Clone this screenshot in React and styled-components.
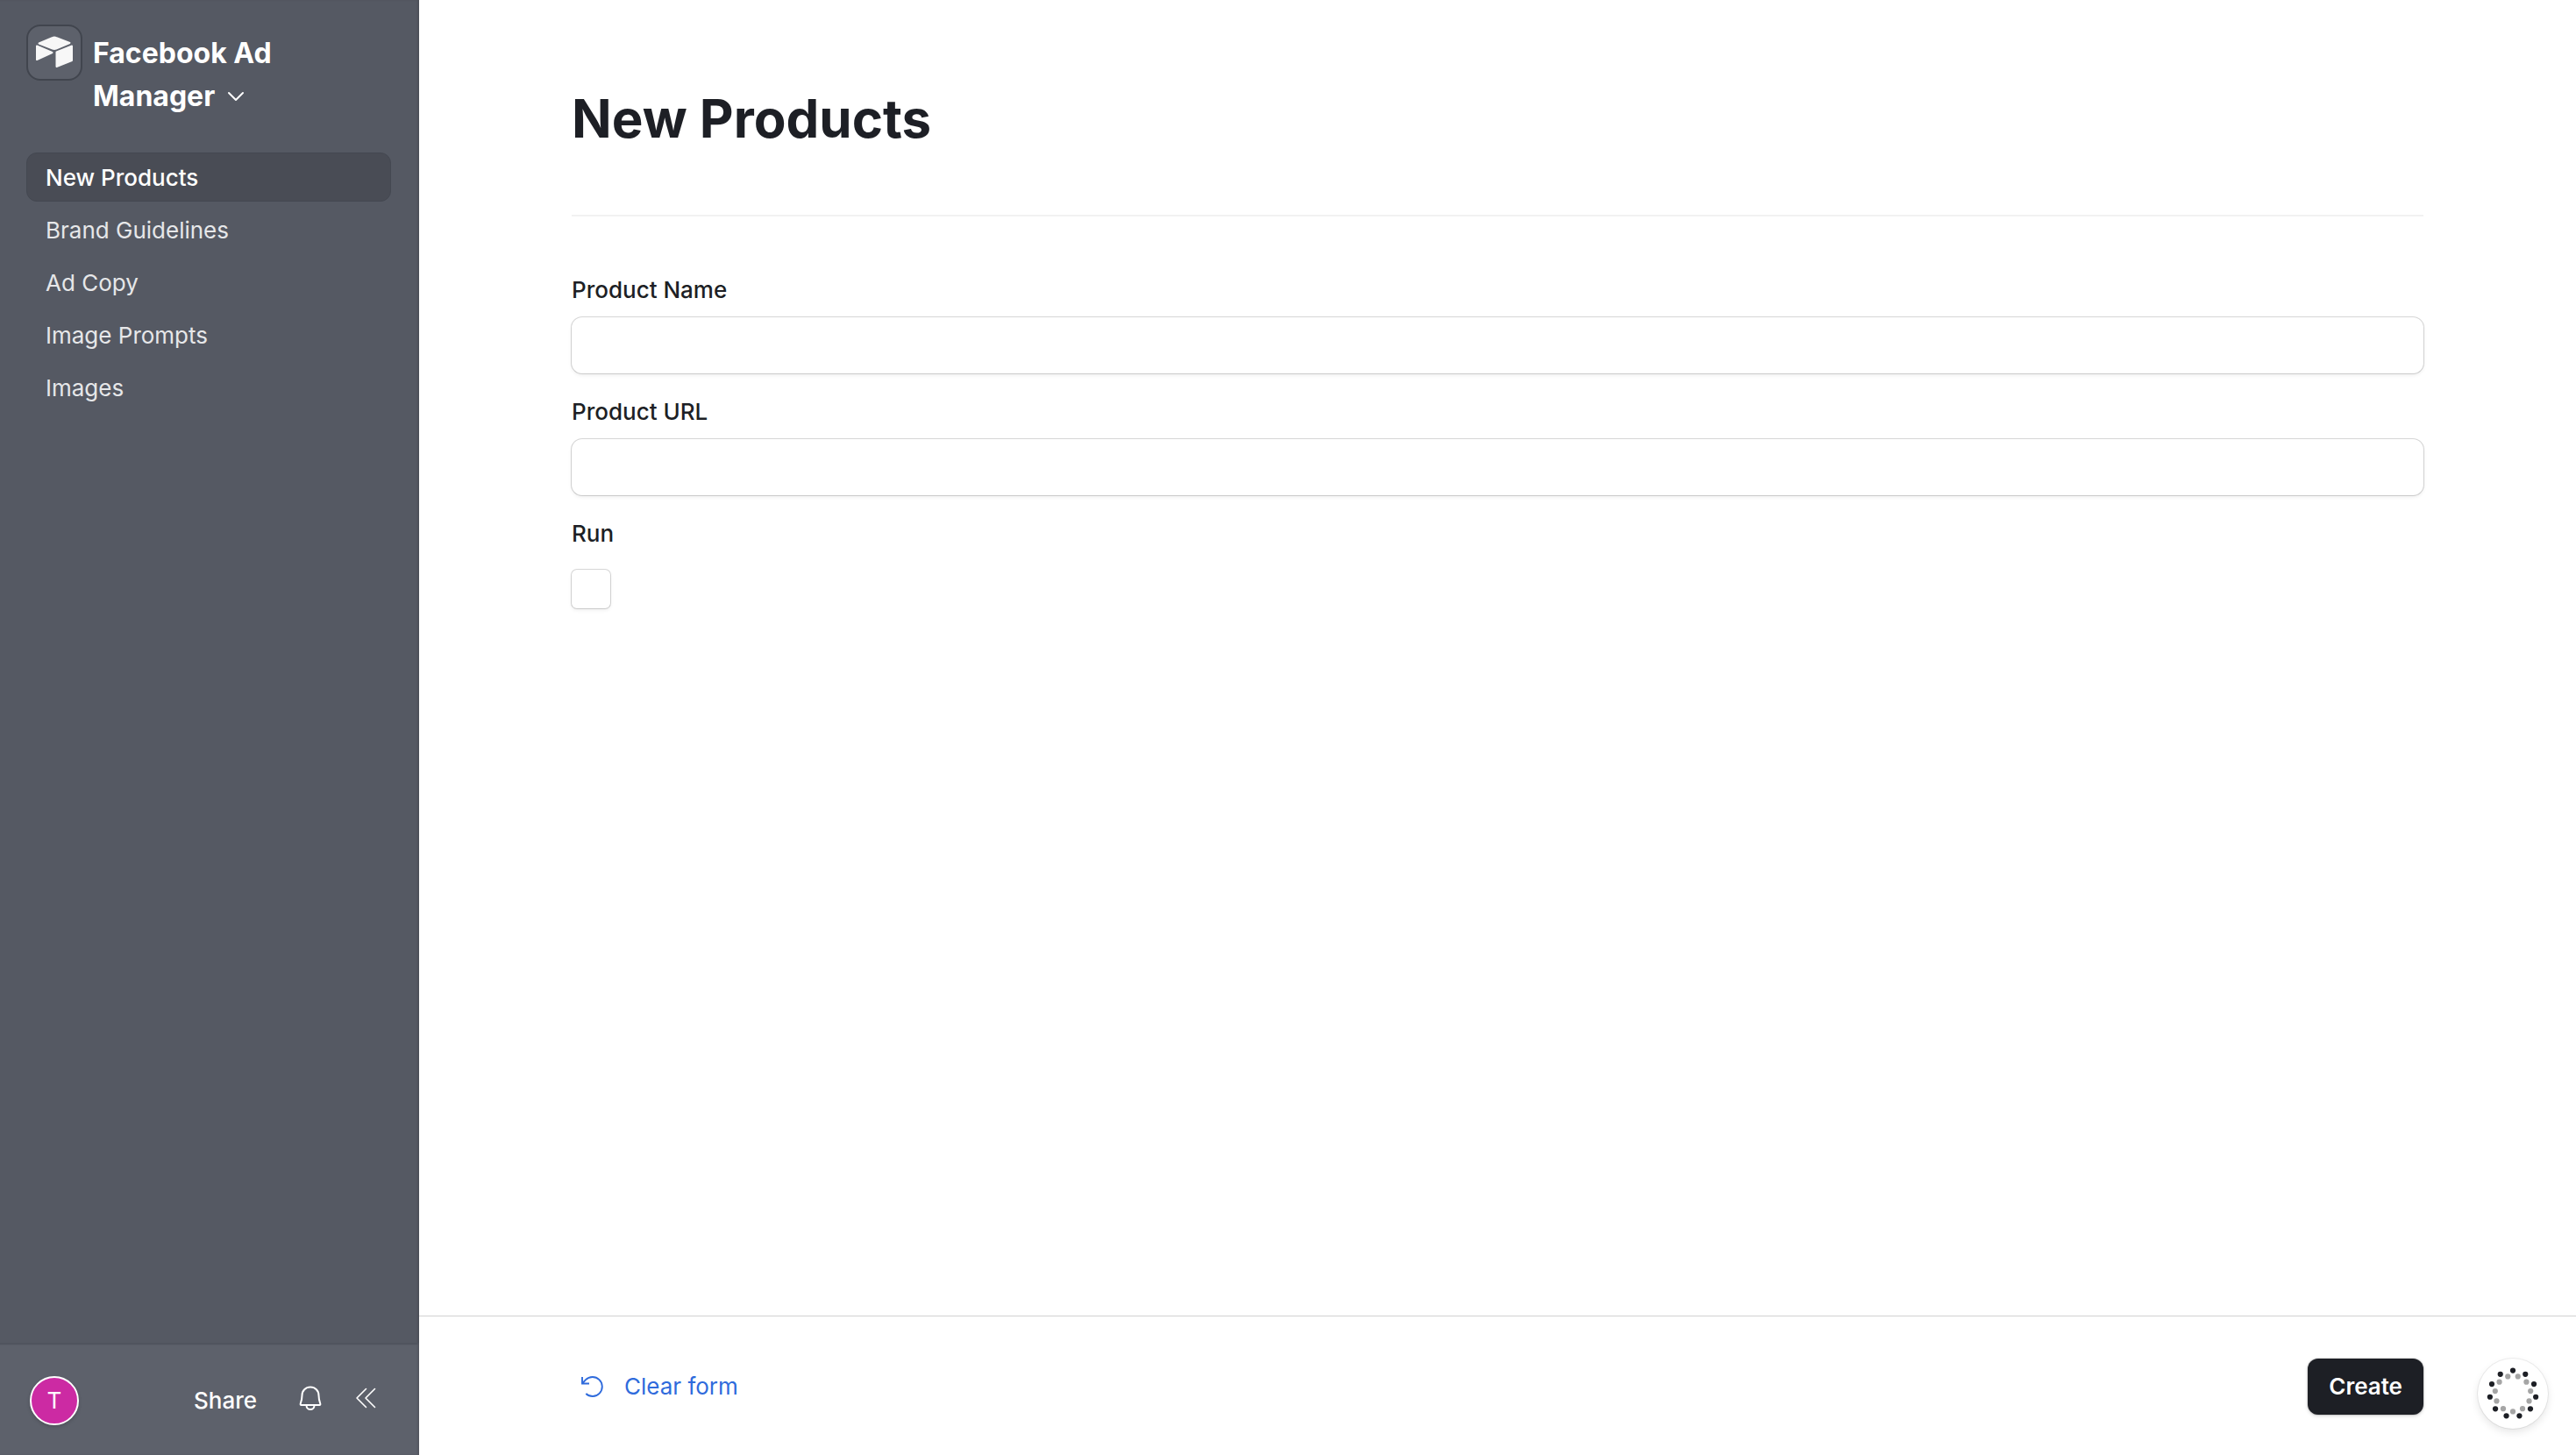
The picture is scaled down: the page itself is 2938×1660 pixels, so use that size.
import React, { useState } from "react";
import styled, { createGlobalStyle } from "styled-components";

const GlobalStyle = createGlobalStyle`
  *, *::before, *::after { box-sizing: border-box; }
  body {
    margin: 0;
    background: #fff;
    color: #1d1f25;
    font-family: Inter, "Noto Sans", sans-serif;
    font-size: 26px;
    line-height: 40px;
    -webkit-font-smoothing: antialiased;
  }
  button, input { font: inherit; color: inherit; }
  svg { display: block; flex: none; }
`;

const Page = styled.div`
  display: flex;
  min-height: 100vh;
`;

const Sidebar = styled.aside`
  flex: none;
  width: 478px;
  display: flex;
  flex-direction: column;
  background: #555963;
  color: #fff;
  box-shadow: inset -2px 0 2px rgba(0, 0, 0, 0.1);
`;

const SidebarTop = styled.div`
  flex: 1;
  padding: 28px 32px 28px 30px;
`;

const Brand = styled.header`
  display: flex;
  align-items: flex-start;
  gap: 12px;
`;

const LogoBox = styled.div`
  flex: none;
  width: 64px;
  height: 64px;
  display: grid;
  place-items: center;
  padding-bottom: 2px;
  border: 2px solid #41454e;
  border-radius: 16px;
  background: #5d616b;
`;

const BrandButton = styled.button`
  max-width: 240px;
  margin: 0;
  padding: 8px 0 0;
  border: 0;
  background: none;
  text-align: left;
  font-size: 32px;
  font-weight: 700;
  line-height: 49px;

  svg {
    display: inline-block;
    margin: 0 0 4px 14px;
    vertical-align: middle;
  }
`;

const Nav = styled.nav`
  display: flex;
  flex-direction: column;
  gap: 4px;
  margin-top: 40px;
`;

const NavLink = styled.a`
  padding: 8px 21px 6px;
  border: 1px solid ${(p) => (p.$active ? "#444851" : "transparent")};
  border-radius: 12px;
  background: ${(p) => (p.$active ? "#494c55" : "transparent")};
  color: ${(p) => (p.$active ? "#fff" : "#e6e7e9")};
  font-weight: ${(p) => (p.$active ? 500 : 400)};
  text-decoration: none;
`;

const SidebarFooter = styled.footer`
  display: flex;
  align-items: center;
  justify-content: space-between;
  height: 128px;
  padding: 2px 49px 0 34px;
  border-top: 2px solid #50545e;
  background: #5d616b;
  box-shadow: inset -2px 0 2px rgba(0, 0, 0, 0.1);
`;

const Avatar = styled.button`
  width: 56px;
  height: 56px;
  padding: 0;
  border: 2px solid #fff;
  border-radius: 50%;
  background: #cc2aa3;
  box-shadow: 0 2px 4px rgba(0, 0, 0, 0.16);
  line-height: 52px;
`;

const FooterActions = styled.div`
  display: flex;
  align-items: center;
`;

const PlainButton = styled.button`
  display: flex;
  align-items: center;
  gap: ${(p) => p.$gap || 0}px;
  margin: 0;
  padding: 0;
  border: 0;
  background: none;
  color: ${(p) => p.$color || "#fff"};
  font-weight: ${(p) => p.$weight || 400};
`;

const IconButton = styled(PlainButton)`
  padding-bottom: 6px;
  margin-left: ${(p) => p.$space}px;
`;

const Main = styled.main`
  flex: 1;
  min-width: 0;
  display: flex;
  flex-direction: column;
`;

const Form = styled.form`
  flex: 1;
  display: flex;
  flex-direction: column;
`;

const FormBody = styled.div`
  flex: 1;
  padding: 95px 174px 48px;
`;

const Title = styled.h1`
  margin: 0 0 64px;
  padding: 0 0 70px;
  border-bottom: 2px solid #f2f2f2;
  font-size: 60px;
  font-weight: 700;
  line-height: 80px;
`;

const Fields = styled.div`
  display: flex;
  flex-direction: column;
  gap: 24px;
`;

const Field = styled.div`
  display: flex;
  flex-direction: column;
  align-items: flex-start;
  gap: ${(p) => (p.$wide ? 21 : 11)}px;

  label { font-weight: 500; }
`;

const fieldShadow = `
  0 0 0 1px rgba(0, 0, 0, 0.14),
  0 0 2px rgba(0, 0, 0, 0.06),
  0 2px 4px rgba(0, 0, 0, 0.08)
`;

const TextInput = styled.input`
  width: 100%;
  height: 64px;
  padding: 0 16px;
  border: 0;
  border-radius: 12px;
  outline: none;
  background: #fff;
  box-shadow: ${fieldShadow};
`;

const Checkbox = styled.input`
  appearance: none;
  width: 44px;
  height: 44px;
  margin: 0;
  border-radius: 6px;
  background: #fff;
  box-shadow: ${fieldShadow};

  &:checked { background: #1d1f25; }
`;

const FormFooter = styled.footer`
  display: flex;
  align-items: center;
  justify-content: space-between;
  height: 159px;
  padding: 2px 174px 0 184px;
  border-top: 1px solid #d6d6d6;
  box-shadow: 0 -1px 0 rgba(0, 0, 0, 0.03);
`;

const CreateButton = styled.button`
  height: 64px;
  padding: 0 24px;
  border: 0;
  border-radius: 12px;
  background: #1d1f25;
  color: #fff;
  box-shadow: 0 0 2px rgba(0, 0, 0, 0.4), 0 2px 4px rgba(0, 0, 0, 0.12);
  font-weight: 600;
`;

const HelpButton = styled.button`
  position: fixed;
  right: 32px;
  bottom: 30px;
  width: 80px;
  height: 80px;
  display: grid;
  place-items: center;
  padding: 0;
  border: 0;
  border-radius: 50%;
  background: #fff;
  box-shadow: 0 0 0 1px rgba(0, 0, 0, 0.07), 0 4px 10px rgba(0, 0, 0, 0.1);
`;

const Logo = () => (
  <svg width="44" height="38" viewBox="0 0 44 38" fill="#f7f7f7" stroke="#f7f7f7" strokeWidth="2" strokeLinejoin="round" aria-hidden="true">
    <path d="M4.5 9.5 20 3Q22 2 24 3L39.500 9 24 15.500Q22 16.300 20 15.500Z" />
    <path d="M2 12.500 19.500 20 2 28Z" />
    <path d="M24.500 19.500 42 12.500V29L24.500 36Z" />
  </svg>
);

const ChevronDown = () => (
  <svg width="20" height="12" viewBox="0 0 20 12" fill="none" stroke="#fff" strokeWidth="2" strokeLinecap="round" strokeLinejoin="round" aria-hidden="true">
    <path d="m2 2 8 8 8-8" />
  </svg>
);

const Bell = () => (
  <svg width="26" height="28" viewBox="0 0 26 28" fill="none" stroke="#fff" strokeWidth="2" strokeLinecap="round" strokeLinejoin="round" aria-hidden="true">
    <path d="M3.500 11C3.500 5.500 7.500 1.500 13 1.500S22.500 5.500 22.500 11C22.500 15.500 23.400 18 24.300 20.500Q24.600 22 23.500 22H2.500Q1.400 22 1.700 20.500C2.600 18 3.500 15.500 3.500 11Z" />
    <path d="M8.500 22.500a4.500 4.500 0 0 0 9 0" />
  </svg>
);

const ChevronsLeft = () => (
  <svg width="24" height="24" viewBox="0 0 24 24" fill="none" stroke="#fff" strokeWidth="1.600" strokeLinecap="round" strokeLinejoin="round" aria-hidden="true">
    <path d="M12.500 1.500 2 12l10.500 10.500M22.500 1.500 12 12l10.500 10.500" />
  </svg>
);

const ResetIcon = () => (
  <svg width="28" height="26" viewBox="0 0 28 26" fill="none" stroke="currentColor" strokeWidth="1.900" strokeLinejoin="miter" aria-hidden="true">
    <path d="M2 2v7.500h8" />
    <path d="M2.500 9 6 5.200a11 11 0 1 1 .3 15.800" />
  </svg>
);

const ring = (radius, start, color) =>
  Array.from({ length: 11 }, (_, i) => {
    const a = ((start + (i * 360) / 11) * Math.PI) / 180;
    return (
      <circle
        key={`${color}${i}`}
        cx={32 + radius * Math.cos(a)}
        cy={32 + radius * Math.sin(a)}
        r="3.1"
        fill={color}
      />
    );
  });

const DotRing = () => (
  <svg width="64" height="64" viewBox="0 0 64 64" aria-hidden="true">
    {ring(20.4, 90, "#a5a5a5")}
    {ring(26.4, -90, "#1d1f25")}
  </svg>
);

const pages = ["New Products", "Brand Guidelines", "Ad Copy", "Image Prompts", "Images"];

export default function App() {
  const [active, setActive] = useState(pages[0]);

  return (
    <>
      <GlobalStyle />
      <Page>
        <Sidebar>
          <SidebarTop>
            <Brand>
              <LogoBox>
                <Logo />
              </LogoBox>
              <BrandButton type="button">
                Facebook Ad Manager
                <ChevronDown />
              </BrandButton>
            </Brand>
            <Nav>
              {pages.map((name) => (
                <NavLink
                  key={name}
                  href="#"
                  $active={name === active}
                  aria-current={name === active ? "page" : undefined}
                  onClick={(e) => {
                    e.preventDefault();
                    setActive(name);
                  }}
                >
                  {name}
                </NavLink>
              ))}
            </Nav>
          </SidebarTop>
          <SidebarFooter>
            <Avatar type="button">T</Avatar>
            <FooterActions>
              <PlainButton type="button" $weight={500}>Share</PlainButton>
              <IconButton type="button" $space={48} aria-label="Notifications">
                <Bell />
              </IconButton>
              <IconButton type="button" $space={38} aria-label="Collapse sidebar">
                <ChevronsLeft />
              </IconButton>
            </FooterActions>
          </SidebarFooter>
        </Sidebar>

        <Main>
          <Form onSubmit={(e) => e.preventDefault()}>
            <FormBody>
              <Title>{active}</Title>
              <Fields>
                <Field>
                  <label htmlFor="product-name">Product Name</label>
                  <TextInput id="product-name" type="text" />
                </Field>
                <Field>
                  <label htmlFor="product-url">Product URL</label>
                  <TextInput id="product-url" type="text" />
                </Field>
                <Field $wide>
                  <label htmlFor="run">Run</label>
                  <Checkbox id="run" type="checkbox" />
                </Field>
              </Fields>
            </FormBody>
            <FormFooter>
              <PlainButton type="reset" $gap={22} $color="#2f6bdc">
                <ResetIcon />
                Clear form
              </PlainButton>
              <CreateButton type="submit">Create</CreateButton>
            </FormFooter>
          </Form>
        </Main>
      </Page>
      <HelpButton type="button" aria-label="Help">
        <DotRing />
      </HelpButton>
    </>
  );
}
